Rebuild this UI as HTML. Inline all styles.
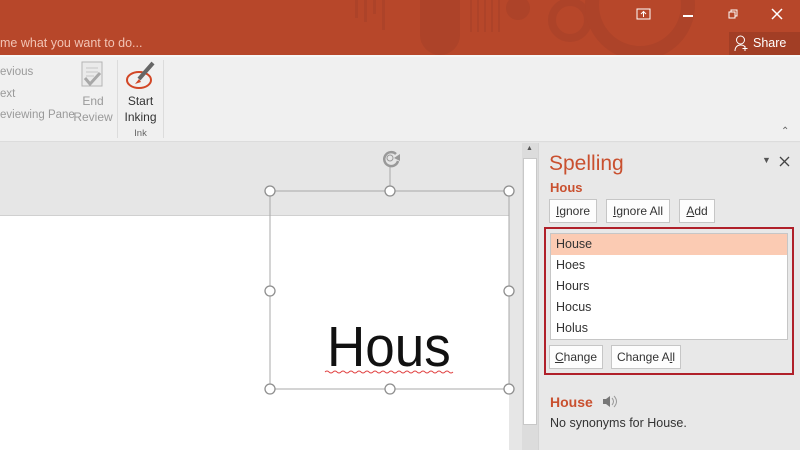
<!DOCTYPE html>
<html><head><style>
*{margin:0;padding:0;box-sizing:border-box}
body{width:800px;height:450px;overflow:hidden;position:relative;font-family:"Liberation Sans",sans-serif;background:#e6e6e6}
.a{position:absolute}
.btn{position:absolute;background:#fdfdfd;border:1px solid #c6c6c6;font-size:12px;color:#333;text-align:center;line-height:22px;height:24px}
.li{position:absolute;left:556px;font-size:12.5px;color:#333}
</style></head><body>
<div class="a" style="left:0;top:0;width:800px;height:55px;background:#b7472a;overflow:hidden">
 <svg class="a" style="left:0;top:0" width="800" height="55">
  <g fill="#ad4329">
   <rect x="355" y="0" width="3" height="18"/><rect x="364" y="0" width="3" height="22"/><rect x="373" y="0" width="3" height="14"/><rect x="382" y="0" width="3" height="30"/>
   <path d="M420 0 h40 v35 a20 20 0 0 1 -40 0z"/>
   <rect x="470" y="0" width="2" height="32"/><rect x="477" y="0" width="2" height="32"/><rect x="484" y="0" width="2" height="32"/><rect x="491" y="0" width="2" height="32"/><rect x="498" y="0" width="2" height="32"/>
   <circle cx="518" cy="8" r="12"/>
   <circle cx="570" cy="20" r="18" fill="none" stroke="#ad4329" stroke-width="8"/>
   <circle cx="640" cy="5" r="48" fill="none" stroke="#ad4329" stroke-width="14"/>
  </g>
  <rect x="729" y="32" width="71" height="23" fill="#a23e25"/>
 </svg>
 <div class="a" style="left:0;top:36px;font-size:12.5px;color:#f2c4b5">me what you want to do...</div>
 <svg class="a" style="left:636px;top:8px" width="16" height="14"><rect x="1" y="1" width="13" height="10" fill="none" stroke="#fff"/><path d="M7.5 9V4M5 6l2.5-2.5L10 6" stroke="#fff" fill="none"/></svg>
 <div class="a" style="left:683px;top:15px;width:10px;height:1.5px;background:#fff"></div>
 <svg class="a" style="left:728px;top:8px" width="12" height="12"><rect x="1" y="4" width="6" height="6" fill="none" stroke="#fff"/><path d="M3 4V2h6v6H7" fill="none" stroke="#fff"/></svg>
 <svg class="a" style="left:771px;top:8px" width="12" height="12"><path d="M1 1L11 11M11 1L1 11" stroke="#fff" stroke-width="1.5"/></svg>
 <svg class="a" style="left:734px;top:35px" width="16" height="17"><circle cx="6.5" cy="5" r="4" fill="none" stroke="#fff"/><path d="M1 16c0-4 2.5-6 5.5-6s4 1 4.5 2M11 11v5M8.5 13.5h5" fill="none" stroke="#fff"/></svg>
 <div class="a" style="left:753px;top:36px;font-size:12.5px;color:#fff">Share</div>
</div>
<div class="a" style="left:0;top:55px;width:800px;height:87px;background:#f0f0f0;border-top:2px solid #f7f7f7;border-bottom:1px solid #dcdcdc"></div>
<div class="a" style="left:0;top:62px;font-size:11.5px;color:#9a9a9a;line-height:21.5px">evious<br>ext<br>eviewing Pane</div>
<svg class="a" style="left:80px;top:61px" width="26" height="30"><rect x="2" y="1" width="20" height="24" fill="#eaeaea" stroke="#b5b5b5"/><path d="M6 7h12M6 11h12M6 15h8" stroke="#c5c5c5"/><path d="M5 17l5 6 10-11" stroke="#a8a8a8" stroke-width="3" fill="none"/></svg>
<div class="a" style="left:73px;top:93px;width:40px;text-align:center;font-size:12px;color:#9a9a9a;line-height:16px">End<br>Review</div>
<div class="a" style="left:117px;top:60px;width:1px;height:78px;background:#dcdcdc"></div>
<div class="a" style="left:163px;top:60px;width:1px;height:78px;background:#dcdcdc"></div>
<svg class="a" style="left:125px;top:60px" width="32" height="32"><ellipse cx="14" cy="20" rx="12" ry="8" fill="none" stroke="#d24726" stroke-width="2"/><path d="M28 3L14 19" stroke="#666" stroke-width="4"/><path d="M14 19l-4 5 6-2z" fill="#d24726"/></svg>
<div class="a" style="left:118px;top:93px;width:45px;text-align:center;font-size:12px;color:#333;line-height:16px">Start<br>Inking</div>
<div class="a" style="left:118px;top:128px;width:45px;text-align:center;font-size:9.5px;color:#666">Ink</div>
<div class="a" style="left:781px;top:126px;font-size:10px;color:#666">&#8963;</div>
<div class="a" style="left:0;top:215px;width:509px;height:235px;background:#fff;border-top:1px solid #d0d0d0"></div>
<div class="a" style="left:522px;top:143px;width:16px;height:307px;background:#dcdcdc"></div>
<div class="a" style="left:523px;top:158px;width:14px;height:267px;background:#fff;border:1px solid #c8c8c8"></div>
<div class="a" style="left:526px;top:145px;font-size:7px;color:#555">&#9650;</div>
<svg class="a" style="left:0;top:140px" width="522" height="260">
 <rect x="270" y="51" width="239" height="198" fill="none" stroke="#a8a8a8"/>
 <line x1="390" y1="26" x2="390" y2="51" stroke="#a8a8a8"/>
 <g fill="#fff" stroke="#8f8f8f" stroke-width="1.3">
  <circle cx="270" cy="51" r="5"/><circle cx="390" cy="51" r="5"/><circle cx="509" cy="51" r="5"/>
  <circle cx="270" cy="151" r="5"/><circle cx="509" cy="151" r="5"/>
  <circle cx="270" cy="249" r="5"/><circle cx="390" cy="249" r="5"/><circle cx="509" cy="249" r="5"/>
 </g>
 <path d="M396 14a7 7 0 1 0 2 7" fill="none" stroke="#999" stroke-width="2.5"/><path d="M394 18l6 3 0-7z" fill="#999"/>
 <circle cx="390" cy="18" r="3" fill="none" stroke="#999"/>
 <path d="M325 232 q2 -2 4 0 t4 0 t4 0 t4 0 t4 0 t4 0 t4 0 t4 0 t4 0 t4 0 t4 0 t4 0 t4 0 t4 0 t4 0 t4 0 t4 0 t4 0 t4 0 t4 0 t4 0 t4 0 t4 0 t4 0 t4 0 t4 0 t4 0 t4 0 t4 0 t4 0 t4 0 t4 0" fill="none" stroke="#e04040" stroke-width="0.9"/>
</svg>
<div class="a" style="left:327px;top:317px;font-size:57px;color:#111;line-height:60px;font-family:'Liberation Sans',sans-serif;transform:scaleX(0.93);transform-origin:left">Hous</div>
<div class="a" style="left:538px;top:143px;width:262px;height:307px;background:#e8e8e8;border-left:1px solid #d4d4d4"></div>
<div class="a" style="left:549px;top:152px;font-size:21px;color:#c9502f">Spelling</div>
<div class="a" style="left:762px;top:155px;font-size:9px;color:#555">&#9660;</div>
<svg class="a" style="left:779px;top:156px" width="11" height="11"><path d="M1 1l9 9M10 1l-9 9" stroke="#444" stroke-width="1.3"/></svg>
<div class="a" style="left:550px;top:180px;font-size:13px;font-weight:bold;color:#c9502f">Hous</div>
<div class="btn" style="left:549px;top:199px;width:48px"><u>I</u>gnore</div>
<div class="btn" style="left:606px;top:199px;width:64px"><u>I</u>gnore All</div>
<div class="btn" style="left:679px;top:199px;width:36px"><u>A</u>dd</div>
<div class="a" style="left:544px;top:227px;width:250px;height:148px;border:2px solid #b0202a"></div>
<div class="a" style="left:550px;top:233px;width:238px;height:107px;background:#fff;border:1px solid #c6c6c6"></div>
<div class="a" style="left:551px;top:234px;width:236px;height:21px;background:#fbcbb3"></div>
<div class="li" style="top:237px">House</div>
<div class="li" style="top:258px">Hoes</div>
<div class="li" style="top:279px">Hours</div>
<div class="li" style="top:300px">Hocus</div>
<div class="li" style="top:321px">Holus</div>
<div class="btn" style="left:549px;top:345px;width:54px"><u>C</u>hange</div>
<div class="btn" style="left:611px;top:345px;width:70px">Change A<u>l</u>l</div>
<div class="a" style="left:550px;top:394px;font-size:14px;font-weight:bold;color:#c9502f">House</div>
<svg class="a" style="left:602px;top:395px" width="16" height="13"><path d="M1 4h3l4-3v11l-4-3H1z" fill="#777"/><path d="M10 3q3 3.5 0 7M12 1q5 5.5 0 11" fill="none" stroke="#999"/></svg>
<div class="a" style="left:550px;top:416px;font-size:12.5px;color:#333">No synonyms for House.</div>
</body></html>
